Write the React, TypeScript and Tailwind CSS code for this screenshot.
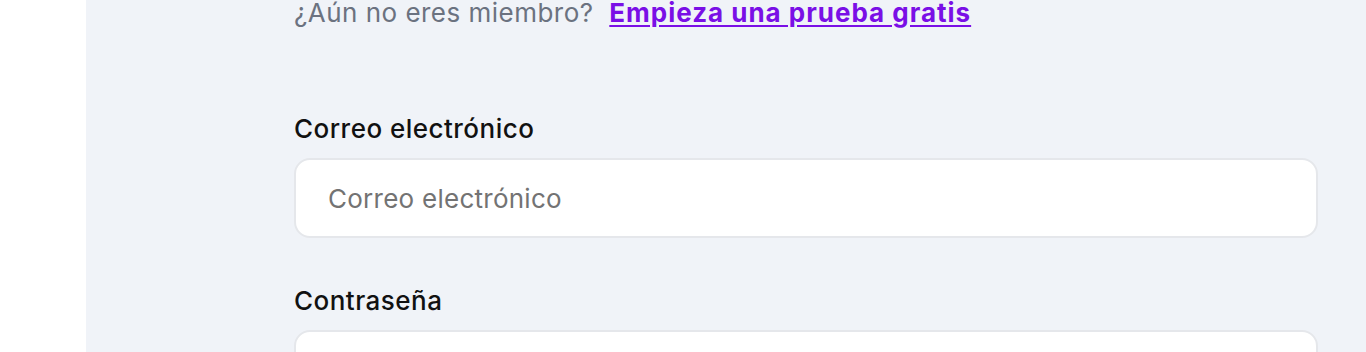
export default function App() {
  return (
    <div className="flex h-[352px] overflow-hidden bg-white font-['Inter',sans-serif] tracking-[0.03em]">
      {/* franja blanca izquierda */}
      <div className="w-[86px] shrink-0 bg-white"></div>

      <div className="flex-1 bg-[#f0f3f8] pl-[208px] pr-[48px]">
        <p className="mt-[-3px] text-[26px] leading-[32px] text-[#6b7280]">
          ¿Aún no eres miembro?{" "}
          <a href="#" className="ml-[8px] font-bold tracking-[0.038em] text-[#7a0fe6] underline underline-offset-[3px]">
            Empieza una prueba gratis
          </a>
        </p>

        <form className="mt-[84px] flex flex-col">
          <label className="text-[26px] leading-[32px] font-medium text-[#111]">
            Correo electrónico
          </label>
          <input
            type="email"
            placeholder="Correo electrónico"
            className="mt-[13px] h-[80px] w-full rounded-[16px] border-2 border-[#e5e7eb] bg-white px-[32px] text-[26px] tracking-[0.01em] text-[#111] placeholder:text-[#737373] outline-none"
          />

          <label className="mt-[47px] text-[26px] leading-[32px] font-medium text-[#111]">
            Contraseña
          </label>
          <input
            type="password"
            className="mt-[13px] h-[80px] w-full rounded-[16px] border-2 border-[#e5e7eb] bg-white px-[32px] text-[26px] outline-none"
          />
        </form>
      </div>
    </div>
  );
}
